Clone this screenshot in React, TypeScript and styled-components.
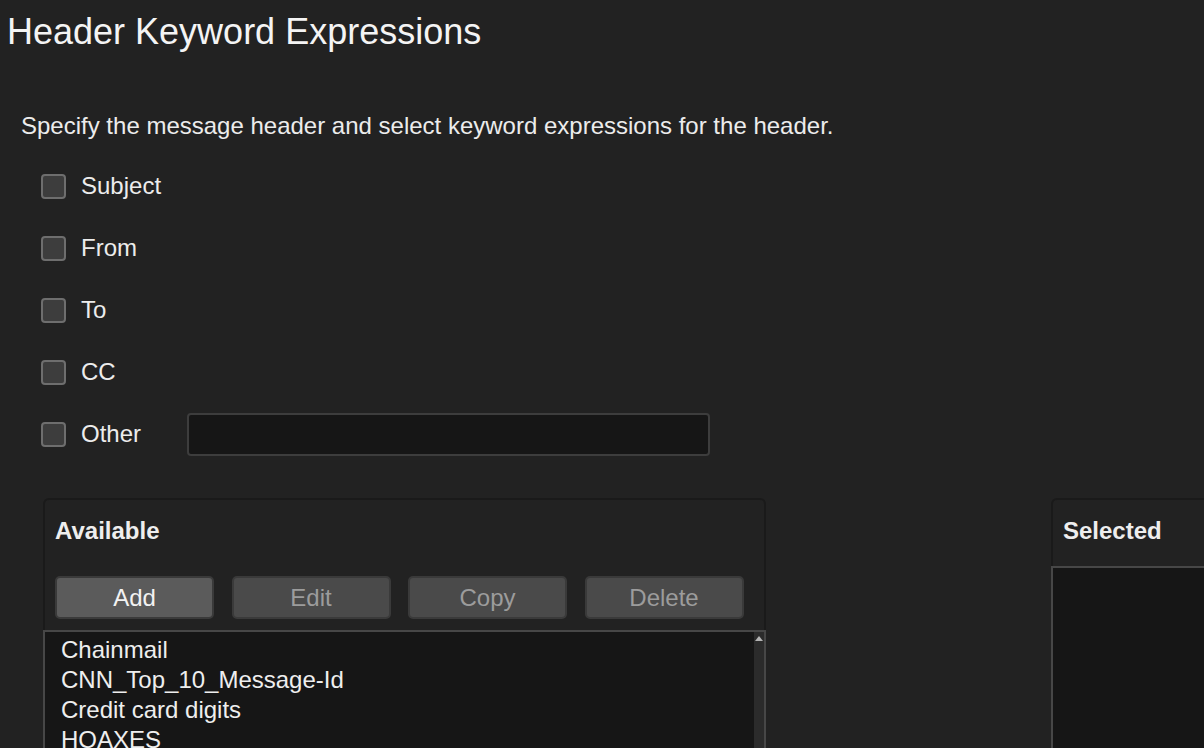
import React from 'react';
import styled, {createGlobalStyle} from 'styled-components';

const GlobalStyle = createGlobalStyle`
  html, body {
    margin: 0;
    padding: 0;
    background: #222222;
    overflow: hidden;
  }
  body {
    font-family: "Liberation Sans", Arial, sans-serif;
    color: #ececec;
  }
`;

const Page = styled.div`
  width: 1204px;
  height: 748px;
  overflow: hidden;
`;

const Title = styled.h1`
  margin: 0;
  padding: 11px 0 0 7px;
  font-size: 36px;
  line-height: 42px;
  font-weight: normal;
  color: #f4f4f4;
`;

const Intro = styled.p`
  margin: 58px 0 0 21px;
  font-size: 24px;
  line-height: 30px;
`;

const Options = styled.div`
  margin: 23px 0 0 41px;
  display: flex;
  flex-direction: column;
  gap: 18px;
`;

const OptionRow = styled.label`
  height: 44px;
  display: flex;
  align-items: center;
  font-size: 24px;
`;

const Box = styled.span`
  width: 21px;
  height: 21px;
  border: 2px solid #6e6e6e;
  border-radius: 4px;
  background: #3d3d3d;
  margin-right: 15px;
  flex: none;
`;

const OptionText = styled.span<{$wide?: boolean}>`
  width: ${p => (p.$wide ? '106px' : 'auto')};
`;

const TextInput = styled.div`
  width: 519px;
  height: 39px;
  border: 2px solid #3d3d3d;
  border-radius: 4px;
  background: #161616;
`;

const Columns = styled.div`
  margin: 42px 0 0 43px;
  display: flex;
  gap: 285px;
  align-items: flex-start;
`;

const Panel = styled.section`
  width: 719px;
  flex: none;
  border: 2px solid #1a1a1a;
  border-bottom: none;
  border-radius: 6px 6px 0 0;
  background: #222222;
`;

const PanelTitle = styled.h2`
  margin: 0;
  padding: 16px 0 0 10px;
  font-size: 24px;
  line-height: 30px;
  font-weight: bold;
  color: #eeeeee;
`;

const Toolbar = styled.div`
  margin: 30px 0 0 10px;
  display: flex;
  gap: 17.5px;
`;

const Button = styled.button<{$primary?: boolean}>`
  width: 159px;
  height: 43px;
  border: 2px solid #3a3a3a;
  border-radius: 5px;
  background: ${p => (p.$primary ? '#5b5b5b' : '#4a4a4a')};
  color: ${p => (p.$primary ? '#f2f2f2' : '#9c9c9c')};
  font-family: "Liberation Sans", Arial, sans-serif;
  font-size: 24px;
  padding: 0;
`;

const List = styled.div<{$top: number}>`
  margin: ${p => p.$top}px -2px 0;
  height: 200px;
  border: 2px solid #474747;
  border-bottom: none;
  background: #161616;
  display: flex;
`;

const Items = styled.ul`
  flex: 1;
  margin: 0;
  padding: 3px 0 0 16px;
  list-style: none;
  font-size: 24px;
  line-height: 30px;
  color: #eeeeee;
`;

const ScrollBar = styled.div`
  width: 10px;
  background: #2b2b2b;
  display: flex;
  justify-content: center;
  padding-top: 4px;
`;

const ArrowUp = styled.span`
  width: 0;
  height: 0;
  border-left: 4px solid transparent;
  border-right: 4px solid transparent;
  border-bottom: 5px solid #b4b4b4;
`;

const options = ['Subject', 'From', 'To', 'CC'];
const available = ['Chainmail', 'CNN_Top_10_Message-Id', 'Credit card digits', 'HOAXES'];

function App() {
  return (
    <Page>
      <GlobalStyle/>
      <Title>Header Keyword Expressions</Title>
      <Intro>Specify the message header and select keyword expressions for the header.</Intro>
      <Options>
        {options.map(o =>
          <OptionRow key={o}>
            <Box/>
            <OptionText>{o}</OptionText>
          </OptionRow>
        )}
        <OptionRow>
          <Box/>
          <OptionText $wide>Other</OptionText>
          <TextInput/>
        </OptionRow>
      </Options>
      <Columns>
        <Panel>
          <PanelTitle>Available</PanelTitle>
          <Toolbar>
            <Button $primary>Add</Button>
            <Button>Edit</Button>
            <Button>Copy</Button>
            <Button>Delete</Button>
          </Toolbar>
          <List $top={11}>
            <Items>
              {available.map(a => <li key={a}>{a}</li>)}
            </Items>
            <ScrollBar><ArrowUp/></ScrollBar>
          </List>
        </Panel>
        <Panel>
          <PanelTitle>Selected</PanelTitle>
          <List $top={20}>
            <Items/>
          </List>
        </Panel>
      </Columns>
    </Page>
  );
}

export default App;
